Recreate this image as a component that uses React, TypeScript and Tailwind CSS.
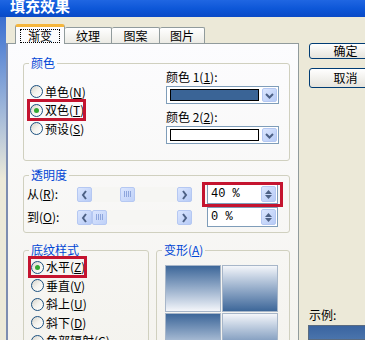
import React from 'react';

const FONT = '"Noto Sans CJK SC", "Noto Sans", "DejaVu Sans", sans-serif';

function U({ c }: { c: string }) {
  return <span className="underline underline-offset-[1px]">{c}</span>;
}

function Radio({ checked }: { checked?: boolean }) {
  return (
    <span className="w-[13px] h-[13px] rounded-full border border-[#1c5180] bg-gradient-to-br from-[#d6d3ca] via-[#f4f3ee] to-white flex items-center justify-center shrink-0">
      {checked && <span className="w-[5px] h-[5px] rounded-full bg-[#32a832]" />}
    </span>
  );
}

function RadioRow({ label, k, checked, red }: { label: string; k: string; checked?: boolean; red?: boolean }) {
  return (
    <div className="h-[18.5px] flex items-center">
      <div className="relative flex items-center gap-[2px]">
        <Radio checked={checked} />
        <span className="text-[12px] leading-[14px] text-black whitespace-nowrap">
          {label}(<U c={k} />)
        </span>
        {red && <span className="absolute -left-[3px] -right-[2px] -top-[4px] -bottom-[4px] border-[3px] border-[#c4142f]" />}
      </div>
    </div>
  );
}

function Chevron({ dir }: { dir: 'l' | 'r' | 'd' }) {
  const pts = dir === 'l' ? '8,3 5,7 8,11' : dir === 'r' ? '5,3 8,7 5,11' : '3,5 6.5,8.5 10,5';
  return (
    <svg width="13" height="13" viewBox="0 0 13 13">
      <polyline points={pts} fill="none" stroke="#4d6185" strokeWidth="2" strokeLinejoin="miter" />
    </svg>
  );
}

function ScrollBtn({ dir }: { dir: 'l' | 'r' }) {
  return (
    <div className="w-[15px] h-[15px] rounded-[2px] border border-[#b5c8f2] bg-gradient-to-br from-[#dbe6fe] to-[#b7cbf6] flex items-center justify-center shrink-0">
      <Chevron dir={dir} />
    </div>
  );
}

function Slider({ pct }: { pct: number }) {
  return (
    <div className="w-[115px] h-[15px] flex items-center">
      <ScrollBtn dir="l" />
      <div className="relative flex-1 h-[15px] bg-[#f6f6f3]">
        <div
          className="absolute top-0 w-[15px] h-[15px] rounded-[2px] border border-[#b5c8f2] bg-gradient-to-br from-[#dbe6fe] to-[#bfd1f8] flex items-center justify-center gap-[1px]"
          style={{ left: `${pct * 70}px` }}
        >
          <span className="w-[1px] h-[6px] bg-[#8ea6dc]" />
          <span className="w-[1px] h-[6px] bg-[#8ea6dc]" />
          <span className="w-[1px] h-[6px] bg-[#8ea6dc]" />
          <span className="w-[1px] h-[6px] bg-[#8ea6dc]" />
        </div>
      </div>
      <ScrollBtn dir="r" />
    </div>
  );
}

function SpinBox({ value, red }: { value: string; red?: boolean }) {
  return (
    <div className="relative ml-[15px]">
      <div className="w-[71px] h-[20px] border border-[#7f9db9] bg-white flex items-center">
        <span className="pl-[3px] flex-1 text-[12px] leading-[14px] text-black whitespace-pre" style={{ fontFamily: '"Liberation Mono", monospace' }}>
          {value}
        </span>
        <div className="w-[15px] h-[16px] mr-[1px] rounded-[2px] border border-[#b5c8f2] bg-gradient-to-br from-[#dbe6fe] to-[#b7cbf6] flex flex-col items-center justify-center gap-[1px]">
          <svg width="7" height="4" viewBox="0 0 7 4"><polygon points="0,4 3.5,0 7,4" fill="#4d6185" /></svg>
          <svg width="7" height="4" viewBox="0 0 7 4"><polygon points="0,0 3.5,4 7,0" fill="#4d6185" /></svg>
        </div>
      </div>
      {red && <span className="absolute -left-[5px] -right-[5px] -top-[2px] -bottom-[3px] border-[3px] border-[#c4142f]" />}
    </div>
  );
}

function ColorCombo({ color }: { color: string }) {
  return (
    <div className="w-[113px] h-[18px] border border-[#7f9db9] bg-white flex items-center">
      <div className="ml-[3px] w-[89px] h-[12px] border border-black" style={{ backgroundColor: color }} />
      <div className="ml-auto mr-[1px] w-[15px] h-[14px] rounded-[2px] border border-[#b5c8f2] bg-gradient-to-br from-[#dbe6fe] to-[#b7cbf6] flex items-center justify-center">
        <Chevron dir="d" />
      </div>
    </div>
  );
}

function Legend({ children }: { children: React.ReactNode }) {
  return <legend className="ml-[5px] px-[2px] text-[12px] leading-[14px] text-[#0046d5]">{children}</legend>;
}

function Tab({ label, w, selected }: { label: string; w: string; selected?: boolean }) {
  if (selected) {
    return (
      <div className={`${w} h-[20px] -mb-[1px] relative z-10 border border-[#919b9c] border-b-0 border-t-[3px] border-t-[#f5b63c] rounded-t-[3px] bg-[#fcfcfe] flex items-center justify-center`}>
        <span className="border border-dotted border-black px-[7px] text-[12px] leading-[12px] text-black">{label}</span>
      </div>
    );
  }
  return (
    <div className={`${w} h-[16px] border border-[#919b9c] border-b-0 border-l-0 rounded-t-[2px] bg-gradient-to-b from-white to-[#ecebe5] flex items-center justify-center`}>
      <span className="text-[12px] leading-[14px] text-black">{label}</span>
    </div>
  );
}

function XpButton({ label }: { label: string }) {
  return (
    <div className="w-[75px] h-[20px] rounded-[3px] border border-[#003c74] bg-gradient-to-b from-white to-[#e6e4dc] flex items-center justify-center pr-[2px]">
      <span className="text-[12px] leading-[14px] text-black">{label}</span>
    </div>
  );
}

function Swatch({ dark }: { dark: 'top' | 'bottom' }) {
  return (
    <div
      className={`w-[56px] h-[47px] border border-[#a7b6c9] ${dark === 'top' ? 'bg-gradient-to-b from-[#3d6799] to-[#f4f6fa]' : 'bg-gradient-to-b from-[#f4f6fa] to-[#3d6799]'}`}
    />
  );
}

export default function App() {
  return (
    <div className="w-[365px] h-[340px] overflow-hidden bg-[#ece9d8] flex flex-col" style={{ fontFamily: FONT }}>
      {/* Title bar */}
      <div className="h-[17px] shrink-0 overflow-hidden bg-gradient-to-b from-[#1f66e2] via-[#0d57d8] to-[#0a4ac6] pl-[10px]">
        <div className="-mt-[2px] text-[15px] leading-[15px] font-bold text-white tracking-[0px]">填充效果</div>
      </div>

      <div className="flex flex-1 min-h-0">
        {/* left frame */}
        <div className="w-[6px] shrink-0 bg-gradient-to-b from-[#3b6fd0] via-[#ece9d8] to-[#ece9d8]" />

        {/* Tab area */}
        <div className="w-[293px] shrink-0 flex flex-col">
          <div className="h-[26px] shrink-0 flex items-end pl-[9px]">
            <Tab label="渐变" w="w-[50px]" selected />
            <Tab label="纹理" w="w-[47px]" />
            <Tab label="图案" w="w-[48px]" />
            <Tab label="图片" w="w-[45px]" />
          </div>

          <div className="flex-1 border border-[#919b9c] border-l-2 border-l-[#7d8db0] bg-gradient-to-b from-[#fcfcfe] to-[#f4f3ee] pl-[15px]">
            {/* 颜色 */}
            <fieldset className="mt-[12px] w-[267px] border border-[#d0d0bf] rounded-[3px]">
              <Legend>颜色</Legend>
              <div className="h-[90px] flex">
                <div className="w-[142px] pl-[6px] pt-[12.5px]">
                  <RadioRow label="单色" k="N" />
                  <RadioRow label="双色" k="T" checked red />
                  <RadioRow label="预设" k="S" />
                </div>
                <div className="flex flex-col">
                  <div className="text-[12px] leading-[14px] text-black">颜色 1(<U c="1" />):</div>
                  <div className="mt-[2px]"><ColorCombo color="#3a6496" /></div>
                  <div className="mt-[6px] text-[12px] leading-[14px] text-black">颜色 2(<U c="2" />):</div>
                  <div className="mt-[2px]"><ColorCombo color="#ffffff" /></div>
                </div>
              </div>
            </fieldset>

            {/* 透明度 */}
            <fieldset className="mt-[7px] w-[267px] border border-[#d0d0bf] rounded-[3px]">
              <Legend>透明度</Legend>
              <div className="pt-[1px] pb-[4px] flex flex-col gap-[1px]">
                <div className="h-[22px] flex items-center">
                  <div className="w-[53px] pl-[3px] text-[12px] leading-[14px] text-black">从(<U c="R" />):</div>
                  <Slider pct={0.4} />
                  <SpinBox value="40 %" red />
                </div>
                <div className="h-[22px] flex items-center">
                  <div className="w-[53px] pl-[3px] text-[12px] leading-[14px] text-black">到(<U c="O" />):</div>
                  <Slider pct={0} />
                  <SpinBox value="0 %" />
                </div>
              </div>
            </fieldset>

            {/* bottom groups */}
            <div className="mt-[10px] flex gap-[7px]">
              <fieldset className="w-[126px] border border-[#d0d0bf] rounded-[3px]">
                <Legend>底纹样式</Legend>
                <div className="pl-[7px] pt-[1px] h-[100px]">
                  <RadioRow label="水平" k="Z" checked red />
                  <RadioRow label="垂直" k="V" />
                  <RadioRow label="斜上" k="U" />
                  <RadioRow label="斜下" k="D" />
                  <RadioRow label="角部辐射" k="C" />
                </div>
              </fieldset>
              <fieldset className="w-[134px] border border-[#d0d0bf] rounded-[3px]">
                <Legend>变形(<U c="A" />)</Legend>
                <div className="pl-[8px] pt-[8px] h-[100px]">
                  <div className="grid grid-cols-[56px_56px] gap-[1px]">
                    <Swatch dark="top" />
                    <Swatch dark="bottom" />
                    <Swatch dark="top" />
                    <Swatch dark="bottom" />
                  </div>
                </div>
              </fieldset>
            </div>
          </div>
        </div>

        {/* Right column */}
        <div className="w-[85px] shrink-0 pl-[10px] pt-[26px] flex flex-col">
          <XpButton label="确定" />
          <div className="mt-[9px]"><XpButton label="取消" /></div>
          <div className="mt-[220px] text-[12px] leading-[14px] text-black">示例:</div>
          <div className="mt-[3px] -ml-[1px] w-[75px] h-[40px] border border-[#5a6b80] bg-gradient-to-b from-[#3a64a0] to-[#4a74ac]" />
        </div>
      </div>
    </div>
  );
}
